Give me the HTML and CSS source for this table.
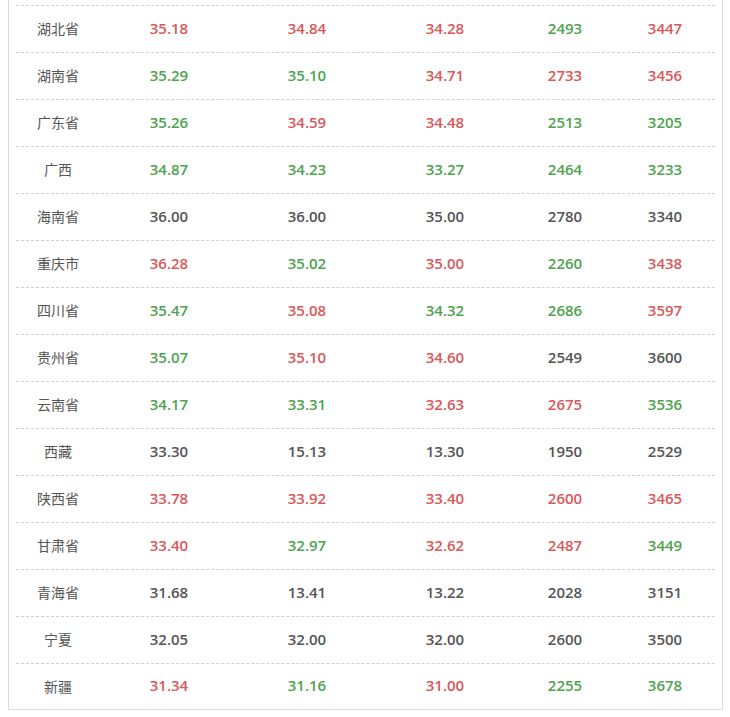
FILE: index.html
```html
<!DOCTYPE html>
<html lang="zh">
<head>
<meta charset="utf-8">
<link rel="stylesheet" href="styles.css">
</head>
<body>
<div class="box">
  <div class="row"><span class="prov">湖北省</span><span class="r">35.18</span><span class="r">34.84</span><span class="r">34.28</span><span class="g">2493</span><span class="r">3447</span></div>
  <div class="row"><span class="prov">湖南省</span><span class="g">35.29</span><span class="g">35.10</span><span class="r">34.71</span><span class="r">2733</span><span class="r">3456</span></div>
  <div class="row"><span class="prov">广东省</span><span class="g">35.26</span><span class="r">34.59</span><span class="r">34.48</span><span class="g">2513</span><span class="g">3205</span></div>
  <div class="row"><span class="prov">广西</span><span class="g">34.87</span><span class="g">34.23</span><span class="g">33.27</span><span class="g">2464</span><span class="g">3233</span></div>
  <div class="row"><span class="prov">海南省</span><span class="n">36.00</span><span class="n">36.00</span><span class="n">35.00</span><span class="n">2780</span><span class="n">3340</span></div>
  <div class="row"><span class="prov">重庆市</span><span class="r">36.28</span><span class="g">35.02</span><span class="r">35.00</span><span class="g">2260</span><span class="r">3438</span></div>
  <div class="row"><span class="prov">四川省</span><span class="g">35.47</span><span class="r">35.08</span><span class="g">34.32</span><span class="g">2686</span><span class="r">3597</span></div>
  <div class="row"><span class="prov">贵州省</span><span class="g">35.07</span><span class="r">35.10</span><span class="r">34.60</span><span class="n">2549</span><span class="n">3600</span></div>
  <div class="row"><span class="prov">云南省</span><span class="g">34.17</span><span class="g">33.31</span><span class="r">32.63</span><span class="r">2675</span><span class="g">3536</span></div>
  <div class="row"><span class="prov">西藏</span><span class="n">33.30</span><span class="n">15.13</span><span class="n">13.30</span><span class="n">1950</span><span class="n">2529</span></div>
  <div class="row"><span class="prov">陕西省</span><span class="r">33.78</span><span class="r">33.92</span><span class="r">33.40</span><span class="r">2600</span><span class="r">3465</span></div>
  <div class="row"><span class="prov">甘肃省</span><span class="r">33.40</span><span class="g">32.97</span><span class="r">32.62</span><span class="r">2487</span><span class="g">3449</span></div>
  <div class="row"><span class="prov">青海省</span><span class="n">31.68</span><span class="n">13.41</span><span class="n">13.22</span><span class="n">2028</span><span class="n">3151</span></div>
  <div class="row"><span class="prov">宁夏</span><span class="n">32.05</span><span class="n">32.00</span><span class="n">32.00</span><span class="n">2600</span><span class="n">3500</span></div>
  <div class="row last"><span class="prov">新疆</span><span class="r">31.34</span><span class="g">31.16</span><span class="r">31.00</span><span class="g">2255</span><span class="g">3678</span></div>
</div>
</body>
</html>
```
FILE: styles.css
```css
html, body {
  margin: 0;
  padding: 0;
  background: #ffffff;
}
body {
  font-family: "Open Sans", "Noto Sans CJK SC", sans-serif;
}
.box {
  box-sizing: border-box;
  margin-left: 8px;
  width: 715px;
  padding: 5px 7px 0 7px;
  border-left: 1px solid #dcdcdc;
  border-right: 1px solid #dcdcdc;
  border-bottom: 1px solid #dcdcdc;
}
.row {
  display: grid;
  grid-template-columns: 84px 138px 138px 138px 102px 98px;
  height: 46px;
  align-items: center;
  border-top: 1px dashed #d0d0d0;
  text-align: center;
}
.row.last {
  height: 45px;
}
.row span {
  font-size: 15px;
  font-weight: 600;
  line-height: 20px;
  margin-top: -3px;
}
.row .prov {
  font-family: "Noto Sans CJK SC", sans-serif;
  font-size: 14px;
  font-weight: 400;
  color: #555555;
  margin-top: -2px;
}
.r { color: #d9585a; }
.g { color: #4ea350; }
.n { color: #555555; }
```
